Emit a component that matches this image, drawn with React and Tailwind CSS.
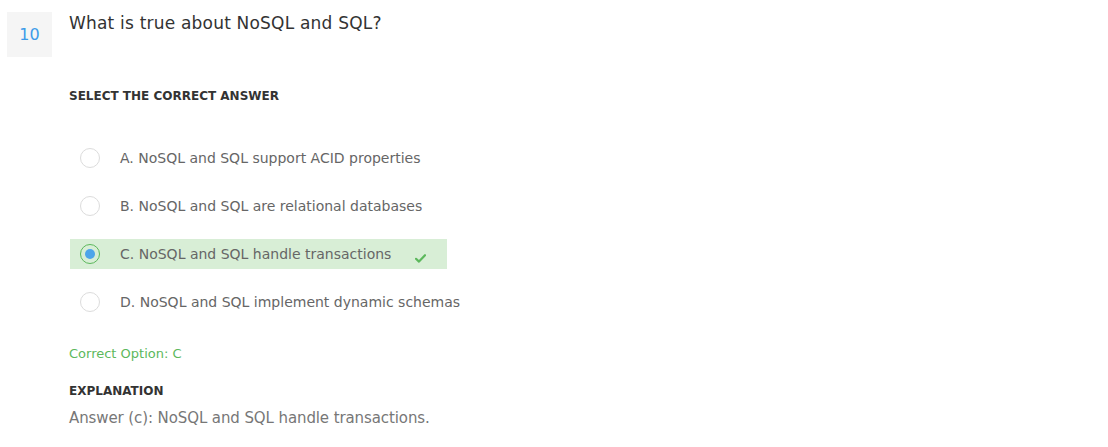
const options = [
  { key: "A", text: "NoSQL and SQL support ACID properties" },
  { key: "B", text: "NoSQL and SQL are relational databases" },
  { key: "C", text: "NoSQL and SQL handle transactions", correct: true },
  { key: "D", text: "NoSQL and SQL implement dynamic schemas" },
];

function CheckIcon() {
  return (
    <svg width="11" height="9" viewBox="0 0 11 9" fill="none">
      <path d="M1 4.8 L4 7.6 L10 1.2" stroke="#5cb85c" strokeWidth="2.2" strokeLinecap="round" strokeLinejoin="round" />
    </svg>
  );
}

export default function App() {
  return (
    <div className="bg-white w-[1108px] h-[447px] font-['DejaVu_Sans',sans-serif] flex pl-[7px] pt-[12px]">
      {/* Question number */}
      <div className="w-[45px] h-[45px] bg-[#f5f5f5] flex items-center justify-center text-[16px] text-[#3d9be9] shrink-0">
        10
      </div>

      <div className="ml-[17px] flex flex-col">
        <h2 className="text-[17px] leading-[22px] tracking-[0.2px] text-[#333]">What is true about NoSQL and SQL?</h2>

        <p className="mt-[54px] text-[12px] leading-[16px] font-bold text-[#333]">SELECT THE CORRECT ANSWER</p>

        <div className="mt-[39px] ml-[1px] flex flex-col items-start gap-[18px]">
          {options.map(o => (
            <div
              key={o.key}
              className={
                o.correct
                  ? "min-w-[377px] h-[30px] flex items-center pl-[10px] bg-[#d8eed6] whitespace-nowrap"
                  : "min-w-[377px] h-[30px] flex items-center pl-[10px] whitespace-nowrap"
              }
            >
              {o.correct ? (
                <span className="w-[20px] h-[20px] shrink-0 rounded-full border border-[#5cb85c] flex items-center justify-center">
                  <span className="w-[10px] h-[10px] rounded-full bg-[#4ea5ea]" />
                </span>
              ) : (
                <span className="w-[20px] h-[20px] shrink-0 rounded-full border border-[#dcdcdc] bg-white" />
              )}
              <span className="ml-[20px] text-[14px] text-[#666]">
                {o.key}. {o.text}
              </span>
              {o.correct && (
                <span className="ml-[24px] mt-[8px]">
                  <CheckIcon />
                </span>
              )}
            </div>
          ))}
        </div>

        <p className="mt-[29px] text-[13px] leading-[16px] font-medium text-[#5cb85c]">Correct Option: C</p>

        <p className="mt-[21px] text-[12px] leading-[16px] font-bold text-[#333]">EXPLANATION</p>

        <p className="mt-[9px] text-[15px] leading-[20px] tracking-[-0.1px] text-[#777]">Answer (c): NoSQL and SQL handle transactions.</p>
      </div>
    </div>
  );
}
